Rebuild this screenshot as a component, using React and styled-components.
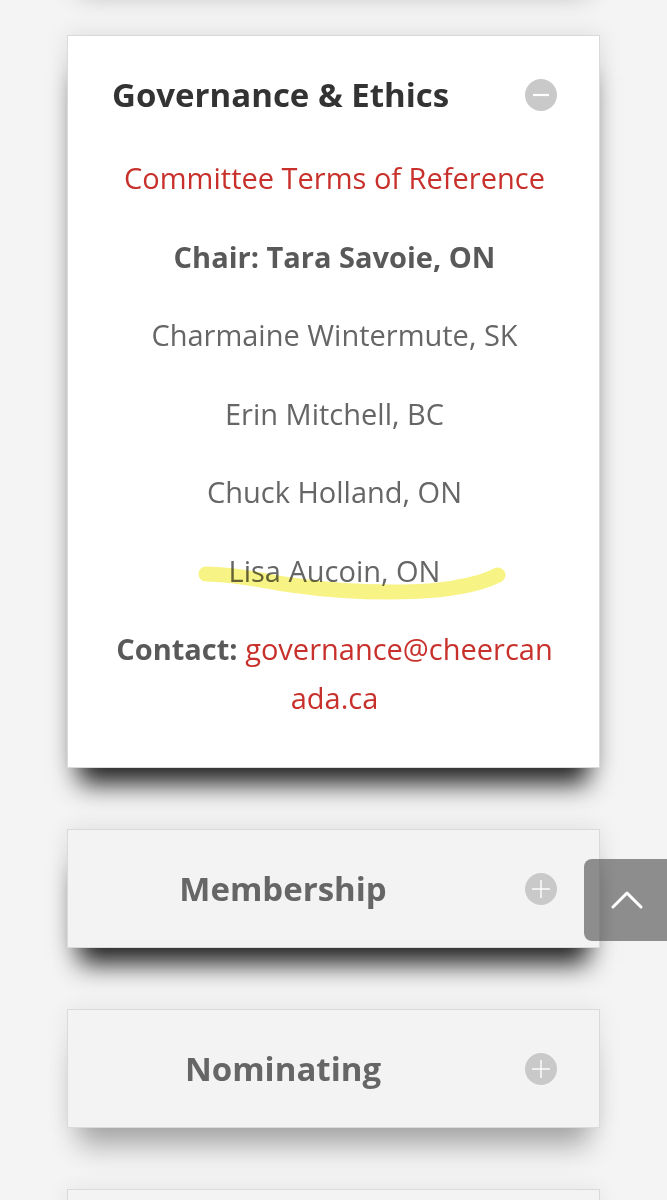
import React from "react";
import styled, { createGlobalStyle, css } from "styled-components";

const Global = createGlobalStyle`
  html, body { margin: 0; padding: 0; background: #f4f4f4; }
  body { font-family: "Open Sans", "Noto Sans", sans-serif; overflow: hidden; }
  * { box-sizing: border-box; }
`;

const Page = styled.main`
  min-height: 1200px;
  padding: 0 67px;
  overflow: hidden;
`;

const Stack = styled.div`
  display: flex;
  flex-direction: column;
  gap: 61px;
  margin-top: -145px;
  padding-bottom: 80px;
`;

const Card = styled.section`
  position: relative;
  width: 533px;
  background: ${(p) => (p.$open ? "#ffffff" : "#f3f3f3")};
  border: 1px solid #dadada;
  ${(p) =>
    p.$deep
      ? css`
          box-shadow: 0 28px 24px -12px rgba(0, 0, 0, 0.85),
            0 0 22px rgba(0, 0, 0, 0.1);
        `
      : css`
          box-shadow: 0 30px 26px -12px rgba(0, 0, 0, 0.3),
            0 0 22px rgba(0, 0, 0, 0.07);
        `}
`;

const Header = styled.header`
  display: flex;
  align-items: center;
  padding: ${(p) => (p.$open ? "39px 42px 0 44px" : "39px 42px 38px 44px")};
`;

const Title = styled.h2`
  margin: 0;
  width: 342px;
  font-size: 33px;
  line-height: 40px;
  font-weight: 700;
  color: ${(p) => (p.$open ? "#333333" : "#666666")};
  text-align: ${(p) => (p.$open ? "left" : "center")};
  white-space: nowrap;
`;

const Toggle = styled.span`
  margin-left: auto;
  width: 32px;
  height: 32px;
  border-radius: 50%;
  background: #c9c9c9;
  display: flex;
  align-items: center;
  justify-content: center;
`;

const Body = styled.div`
  display: flex;
  flex-direction: column;
  gap: 29.5px;
  padding: 38px 44px 45px 46px;
  text-align: center;
  font-size: 29px;
  line-height: 49px;
  color: #666666;
`;

const Line = styled.p`
  margin: 0;
  font-weight: ${(p) => (p.$strong ? 700 : 400)};
  color: ${(p) => (p.$strong ? "#595959" : "#666666")};
  word-break: break-all;
`;

const Link = styled.a`
  color: #c8312b;
  text-decoration: none;
`;

const Label = styled.strong`
  font-weight: 700;
  color: #595959;
`;

const Marked = styled.span`
  position: relative;
  display: inline-block;
`;

const Highlight = styled.svg`
  position: absolute;
  left: -36px;
  top: 18px;
  width: 320px;
  height: 44px;
  pointer-events: none;
  mix-blend-mode: multiply;
`;

const TopButton = styled.button`
  position: fixed;
  left: 584px;
  top: 859px;
  width: 100px;
  height: 82px;
  border: none;
  border-radius: 8px 0 0 8px;
  background: rgba(88, 88, 88, 0.66);
  padding: 0 0 0 27px;
  display: flex;
  align-items: center;
  cursor: pointer;
`;

function MinusIcon() {
  return (
    <svg width="16" height="4" viewBox="0 0 16 4">
      <line x1="0" y1="2" x2="16" y2="2" stroke="#fff" strokeWidth="2.2" />
    </svg>
  );
}

function PlusIcon() {
  return (
    <svg width="20" height="20" viewBox="0 0 20 20">
      <line x1="1" y1="10" x2="19" y2="10" stroke="#fff" strokeWidth="1.4" />
      <line x1="10" y1="1" x2="10" y2="19" stroke="#fff" strokeWidth="1.4" />
    </svg>
  );
}

function Committee({ title, open, deep, children }) {
  return (
    <Card $open={open} $deep={deep}>
      <Header $open={open}>
        <Title $open={open}>{title}</Title>
        <Toggle>{open ? <MinusIcon /> : <PlusIcon />}</Toggle>
      </Header>
      {open && <Body>{children}</Body>}
    </Card>
  );
}

export default function App() {
  return (
    <>
      <Global />
      <Page>
        <Stack>
          <Committee title="Safe Sport" />
          <Committee title="Governance & Ethics" open deep>
            <Line>
              <Link href="#terms">Committee Terms of Reference</Link>
            </Line>
            <Line $strong>Chair: Tara Savoie, ON</Line>
            <Line>Charmaine Wintermute, SK</Line>
            <Line>Erin Mitchell, BC</Line>
            <Line>Chuck Holland, ON</Line>
            <Line>
              <Marked>
                Lisa Aucoin, ON
                <Highlight viewBox="0 0 320 44">
                  <path
                    d="M13 10 C 50 11, 70 17, 98 21 C 140 27, 170 28, 198 28 C 235 28, 255 25, 265 23 C 285 20, 295 16, 305 11"
                    fill="none"
                    stroke="#f6f27a"
                    strokeOpacity="0.92"
                    strokeWidth="15"
                    strokeLinecap="round"
                  />
                </Highlight>
              </Marked>
            </Line>
            <Line>
              <Label>Contact: </Label>
              <Link href="mailto:governance@cheercanada.ca">
                governance@cheercanada.ca
              </Link>
            </Line>
          </Committee>
          <Committee title="Membership" deep />
          <Committee title="Nominating" />
          <Committee title="High Performance" />
        </Stack>
      </Page>
      <TopButton aria-label="Back to top">
        <svg width="32" height="20" viewBox="0 0 32 20">
          <polyline
            points="2,17 16,3 30,17"
            fill="none"
            stroke="#fff"
            strokeWidth="3"
            strokeLinecap="round"
            strokeLinejoin="round"
          />
        </svg>
      </TopButton>
    </>
  );
}
